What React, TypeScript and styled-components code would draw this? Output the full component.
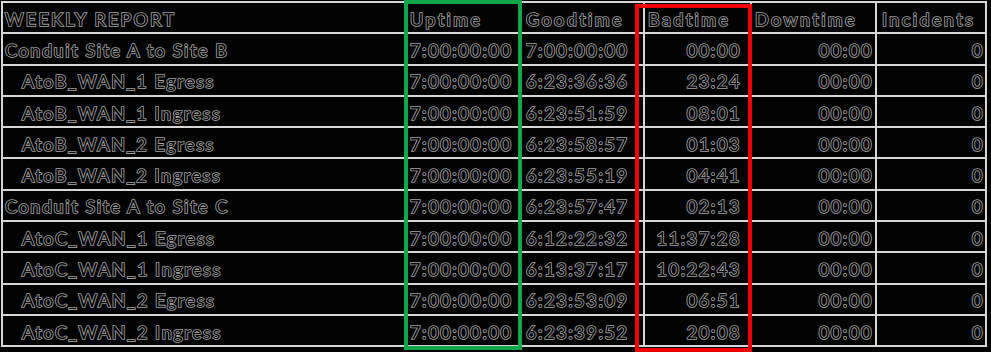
import React from 'react';
import styled, { createGlobalStyle } from 'styled-components';

const GlobalStyle = createGlobalStyle`
  html, body {
    margin: 0;
    padding: 0;
    background: #000;
  }
`;

type Align = 'left' | 'right';

interface Column {
  key: string;
  title: string;
  align: Align;
  padLeft: number;
  padRight: number;
}

interface ReportRow {
  name: string;
  indent: boolean;
  values: string[];
}

const columns: Column[] = [
  { key: 'uptime', title: 'Uptime', align: 'left', padLeft: 4, padRight: 2 },
  { key: 'goodtime', title: 'Goodtime', align: 'left', padLeft: 5, padRight: 2 },
  { key: 'badtime', title: 'Badtime', align: 'right', padLeft: 3, padRight: 9 },
  { key: 'downtime', title: 'Downtime', align: 'right', padLeft: 3, padRight: 2 },
  { key: 'incidents', title: 'Incidents', align: 'right', padLeft: 5, padRight: 1 },
];

const rows: ReportRow[] = [
  { name: 'Conduit Site A to Site B', indent: false, values: ['7:00:00:00', '7:00:00:00', '00:00', '00:00', '0'] },
  { name: 'AtoB_WAN_1 Egress', indent: true, values: ['7:00:00:00', '6:23:36:36', '23:24', '00:00', '0'] },
  { name: 'AtoB_WAN_1 Ingress', indent: true, values: ['7:00:00:00', '6:23:51:59', '08:01', '00:00', '0'] },
  { name: 'AtoB_WAN_2 Egress', indent: true, values: ['7:00:00:00', '6:23:58:57', '01:03', '00:00', '0'] },
  { name: 'AtoB_WAN_2 Ingress', indent: true, values: ['7:00:00:00', '6:23:55:19', '04:41', '00:00', '0'] },
  { name: 'Conduit Site A to Site C', indent: false, values: ['7:00:00:00', '6:23:57:47', '02:13', '00:00', '0'] },
  { name: 'AtoC_WAN_1 Egress', indent: true, values: ['7:00:00:00', '6:12:22:32', '11:37:28', '00:00', '0'] },
  { name: 'AtoC_WAN_1 Ingress', indent: true, values: ['7:00:00:00', '6:13:37:17', '10:22:43', '00:00', '0'] },
  { name: 'AtoC_WAN_2 Egress', indent: true, values: ['7:00:00:00', '6:23:53:09', '06:51', '00:00', '0'] },
  { name: 'AtoC_WAN_2 Ingress', indent: true, values: ['7:00:00:00', '6:23:39:52', '20:08', '00:00', '0'] },
];

const App: React.FC = () => {
  return (
    <>
      <GlobalStyle />
      <Sheet>
        <Grid>
          <Cell $caps>WEEKLY REPORT</Cell>
          {columns.map((col) => (
            <Cell key={col.key} $padLeft={col.padLeft} $wide>{col.title}</Cell>
          ))}
          {rows.map((row) => (
            <React.Fragment key={row.name}>
              <Cell $padLeft={row.indent ? 19 : 2}>{row.name}</Cell>
              {row.values.map((v, i) => (
                <Cell
                  key={columns[i].key}
                  $align={columns[i].align}
                  $padLeft={columns[i].padLeft}
                  $padRight={columns[i].padRight}
                >
                  {v}
                </Cell>
              ))}
            </React.Fragment>
          ))}
        </Grid>
        <Highlight $color="#10a64a" $left={404} $top={0} $width={118} $height={350} />
        <Highlight $color="#ee0000" $left={635} $top={4} $width={117} $height={348} />
      </Sheet>
    </>
  );
};

export default App;


const Sheet = styled.div`
  position: relative;
  width: 991px;
  height: 352px;
  overflow: hidden;
  background: #000;
`;

const Grid = styled.div`
  display: grid;
  grid-template-columns: 401px 113px 122px 105px 123px 108px;
  grid-template-rows: repeat(11, 29.3px);
  gap: 2px;
  padding: 2px;
  margin: 1px 0 0 1px;
  width: max-content;
  background: #d6d6d6;
`;

const Cell = styled.div<{ $align?: Align; $padLeft?: number; $padRight?: number; $caps?: boolean; $wide?: boolean }>`
  display: flex;
  align-items: center;
  justify-content: ${(p) => (p.$align === 'right' ? 'flex-end' : 'flex-start')};
  padding: 2px ${(p) => p.$padRight ?? 2}px 0 ${(p) => p.$padLeft ?? 2}px;
  background: #030303;
  font-family: Lato, 'Liberation Sans', sans-serif;
  font-size: 18px;
  font-weight: 400;
  letter-spacing: ${(p) => (p.$caps ? 2.2 : p.$wide ? 2.4 : 1.6)}px;
  white-space: nowrap;
  color: #000;
  -webkit-text-stroke: 1.7px #a4a4a4;
  paint-order: stroke fill;
`;

const Highlight = styled.div<{ $color: string; $left: number; $top: number; $width: number; $height: number }>`
  position: absolute;
  left: ${(p) => p.$left}px;
  top: ${(p) => p.$top}px;
  width: ${(p) => p.$width}px;
  height: ${(p) => p.$height}px;
  box-sizing: border-box;
  border: 4px solid ${(p) => p.$color};
  pointer-events: none;
`;
